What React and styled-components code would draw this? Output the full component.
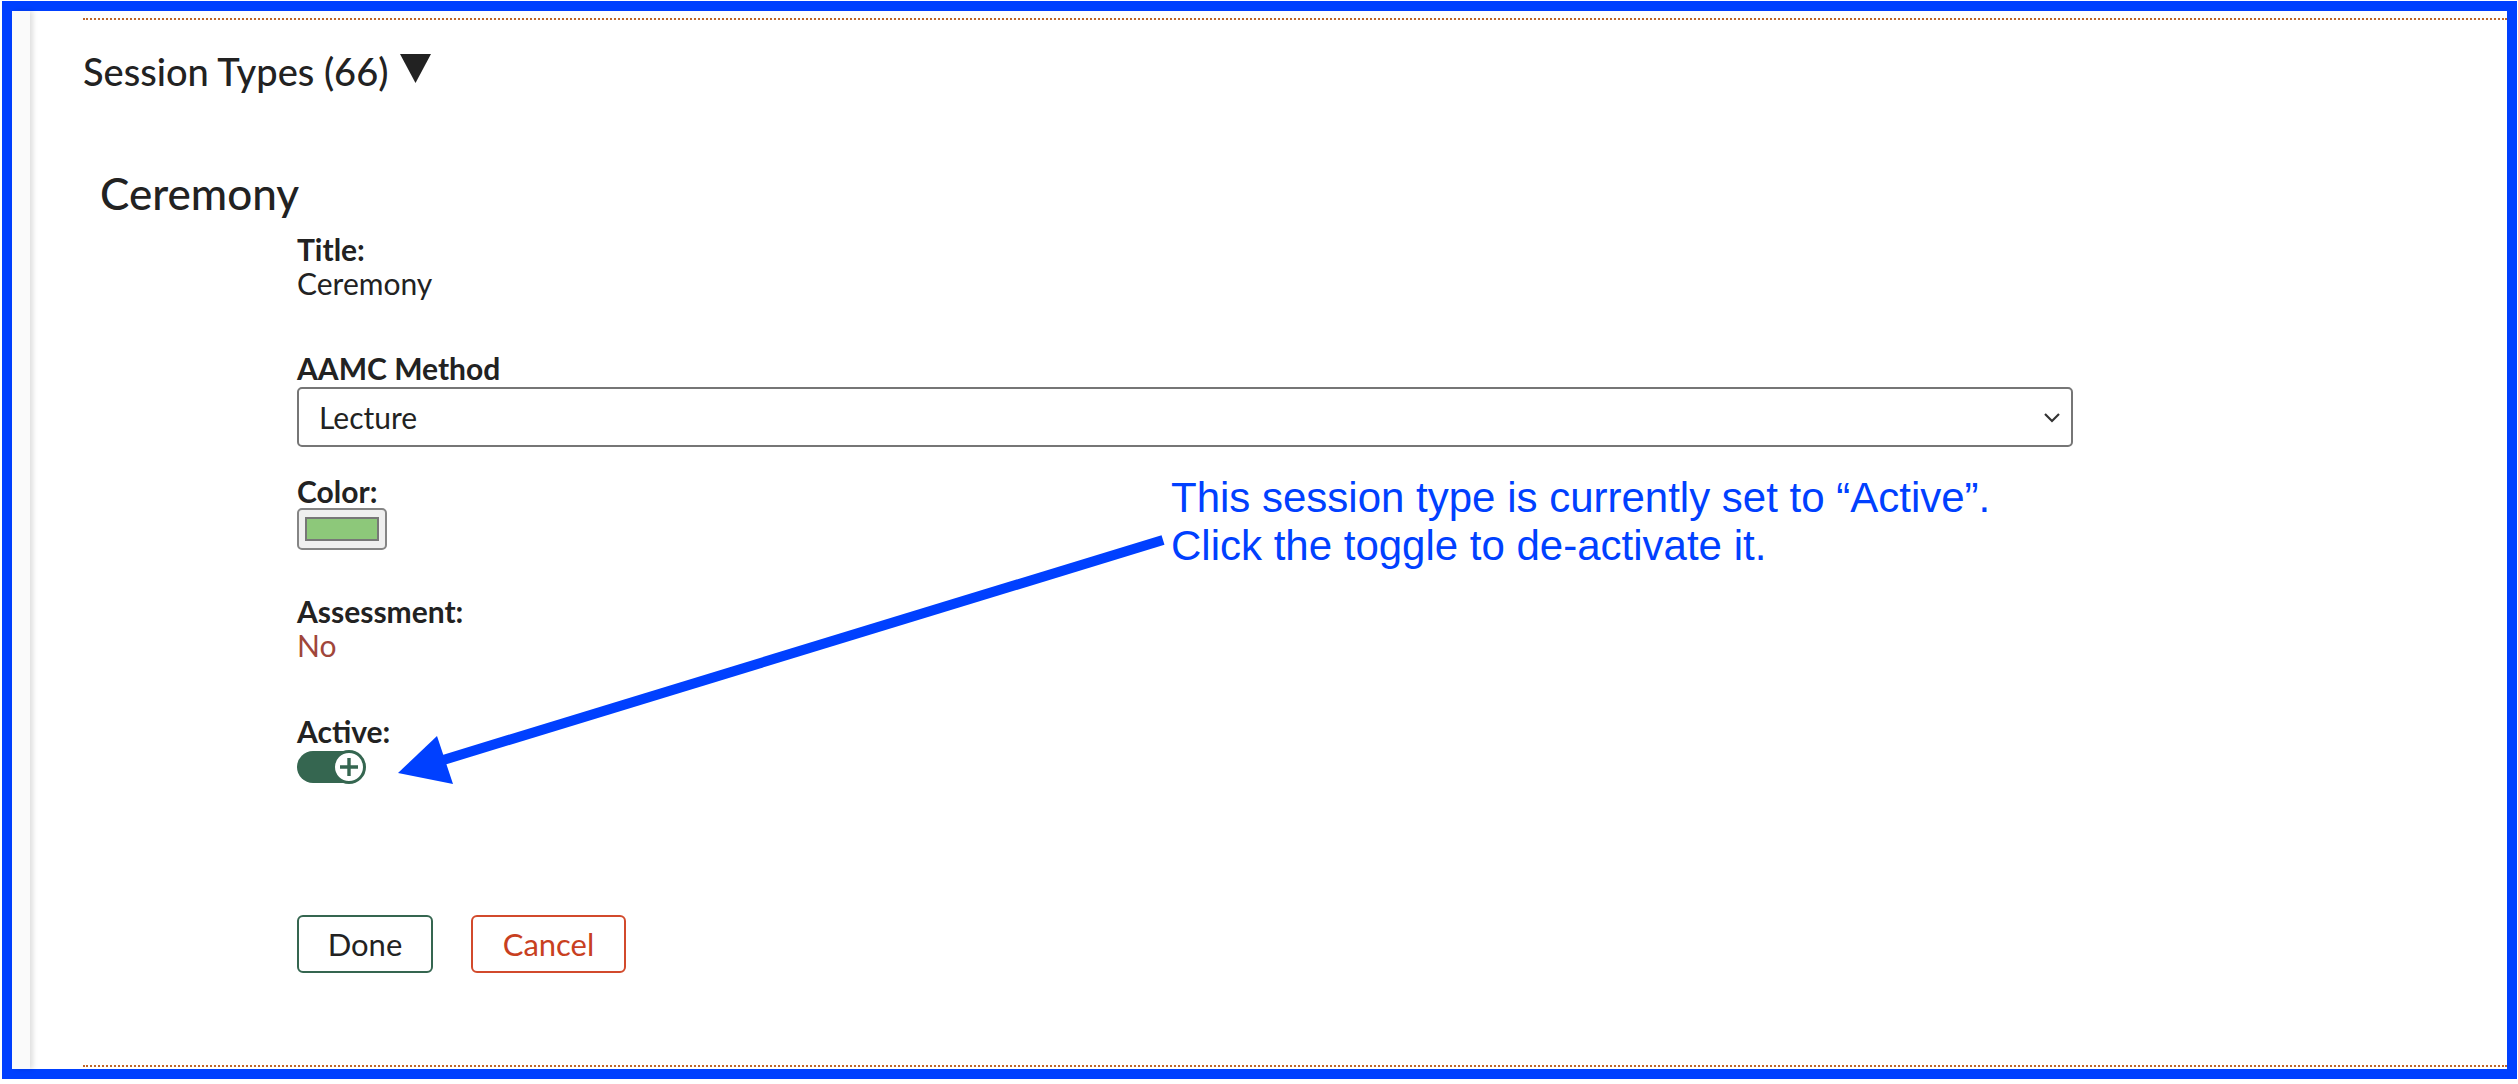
import React from "react"
import styled, { createGlobalStyle } from "styled-components"

const GlobalStyle = createGlobalStyle`
  body {
    margin: 0;
    background: #fff;
    font-family: Lato, "Noto Sans", sans-serif;
    color: #222;
  }
`

const Page = styled.div`
  position: relative;
  width: 2518px;
  height: 1084px;
  overflow: hidden;
`

const Frame = styled.div`
  box-sizing: border-box;
  width: 2515px;
  height: 1078px;
  margin: 1px 0 0 2px;
  border: 10px solid #0040ff;
  display: flex;
`

const Sidebar = styled.div`
  width: 18px;
  flex-shrink: 0;
  background: #fafafa;
  box-shadow: 3px 0 5px rgba(0, 0, 0, 0.13);
`

const Main = styled.main`
  flex: 1;
  display: flex;
  flex-direction: column;
  padding-left: 53px;
`

const Section = styled.section`
  flex: 1;
  margin: 7px 0 2px;
  border-top: 2px dotted #c0682a;
  border-bottom: 2px dotted #c0682a;
`

const SectionTitle = styled.h2`
  margin: 0;
  padding-top: 29px;
  font-size: 38px;
  line-height: 44px;
  font-weight: 500;
  color: #222;
  display: flex;
  align-items: center;
  gap: 12px;
`

const Caret = styled.svg`
  margin-top: -6px;
`

const ItemTitle = styled.h3`
  margin: 75px 0 0 17px;
  font-size: 44px;
  line-height: 50px;
  font-weight: 500;
`

const Form = styled.div`
  padding-left: 214px;
  width: 1776px;
  margin-top: 14px;
`

const Field = styled.div`
  margin-top: ${(p) => p.$space || 0}px;
`

const Label = styled.div`
  font-size: 30px;
  line-height: 34px;
  font-weight: 700;
`

const Value = styled.div`
  font-size: 30px;
  line-height: 34px;
  color: ${(p) => p.$color || "#222"};
`

const SelectBox = styled.div`
  box-sizing: border-box;
  margin-top: 2px;
  height: 60px;
  border: 2px solid #767676;
  border-radius: 5px;
  display: flex;
  align-items: center;
  justify-content: space-between;
  padding: 0 10px 0 20px;
  font-size: 30px;
`

const Swatch = styled.div`
  box-sizing: border-box;
  width: 90px;
  height: 42px;
  padding: 7px 6px;
  background: #efefef;
  border: 2px solid #858585;
  border-radius: 5px;
`

const SwatchFill = styled.div`
  height: 100%;
  box-sizing: border-box;
  background: #8dc87a;
  border: 2px solid #777;
`

const Toggle = styled.div`
  box-sizing: border-box;
  width: 68px;
  height: 32px;
  margin-top: 3px;
  border-radius: 16px;
  background: #356650;
  display: flex;
  justify-content: flex-end;
  align-items: center;
`

const Knob = styled.div`
  box-sizing: border-box;
  width: 34px;
  height: 34px;
  border-radius: 50%;
  background: #fff;
  border: 3px solid #356650;
  display: flex;
  align-items: center;
  justify-content: center;
  margin-right: -1px;
`

const Buttons = styled.div`
  display: flex;
  gap: 38px;
  margin-top: 132px;
`

const Button = styled.button`
  box-sizing: border-box;
  height: 58px;
  width: ${(p) => p.$width}px;
  padding: 0;
  background: #fff;
  border: 2px solid ${(p) => p.$color};
  border-radius: 6px;
  color: ${(p) => p.$text};
  font-family: Lato, "Noto Sans", sans-serif;
  font-size: 31px;
`

const Note = styled.div`
  position: absolute;
  left: 1171px;
  top: 474px;
  font-family: "Liberation Sans", Arial, sans-serif;
  font-size: 42px;
  line-height: 48px;
  color: #0040ff;
`

const ArrowLayer = styled.svg`
  position: absolute;
  left: 0;
  top: 0;
  pointer-events: none;
`

export default function App() {
  return (
    <Page>
      <GlobalStyle />
      <Frame>
        <Sidebar />
        <Main>
          <Section>
            <SectionTitle>
              Session Types (66)
              <Caret width="31" height="30" viewBox="0 0 31 30">
                <polygon points="0,1 31,1 15.5,30" fill="#222" />
              </Caret>
            </SectionTitle>
            <ItemTitle>Ceremony</ItemTitle>
            <Form>
              <Field>
                <Label>Title:</Label>
                <Value>Ceremony</Value>
              </Field>
              <Field $space={51}>
                <Label>AAMC Method</Label>
                <SelectBox>
                  <span>Lecture</span>
                  <svg width="18" height="12" viewBox="0 0 18 12">
                    <path d="M2 3l7 7 7-7" fill="none" stroke="#333" strokeWidth="2.2" />
                  </svg>
                </SelectBox>
              </Field>
              <Field $space={27}>
                <Label>Color:</Label>
                <Swatch>
                  <SwatchFill />
                </Swatch>
              </Field>
              <Field $space={44}>
                <Label>Assessment:</Label>
                <Value $color="#a0463a">No</Value>
              </Field>
              <Field $space={52}>
                <Label>Active:</Label>
                <Toggle>
                  <Knob>
                    <svg width="20" height="20" viewBox="0 0 20 20">
                      <path d="M10 1v18M1 10h18" stroke="#356650" strokeWidth="3.4" />
                    </svg>
                  </Knob>
                </Toggle>
              </Field>
              <Buttons>
                <Button $width={136} $color="#356650" $text="#222">Done</Button>
                <Button $width={155} $color="#d24a2c" $text="#c8401f">Cancel</Button>
              </Buttons>
            </Form>
          </Section>
        </Main>
      </Frame>
      <Note>
        This session type is currently set to “Active”.
        <br />
        Click the toggle to de-activate it.
      </Note>
      <ArrowLayer width="2518" height="1084" viewBox="0 0 2518 1084">
        <line x1="1163" y1="540" x2="440" y2="761" stroke="#0040ff" strokeWidth="10" />
        <polygon points="398,773 437,736 453,784" fill="#0040ff" />
      </ArrowLayer>
    </Page>
  )
}
